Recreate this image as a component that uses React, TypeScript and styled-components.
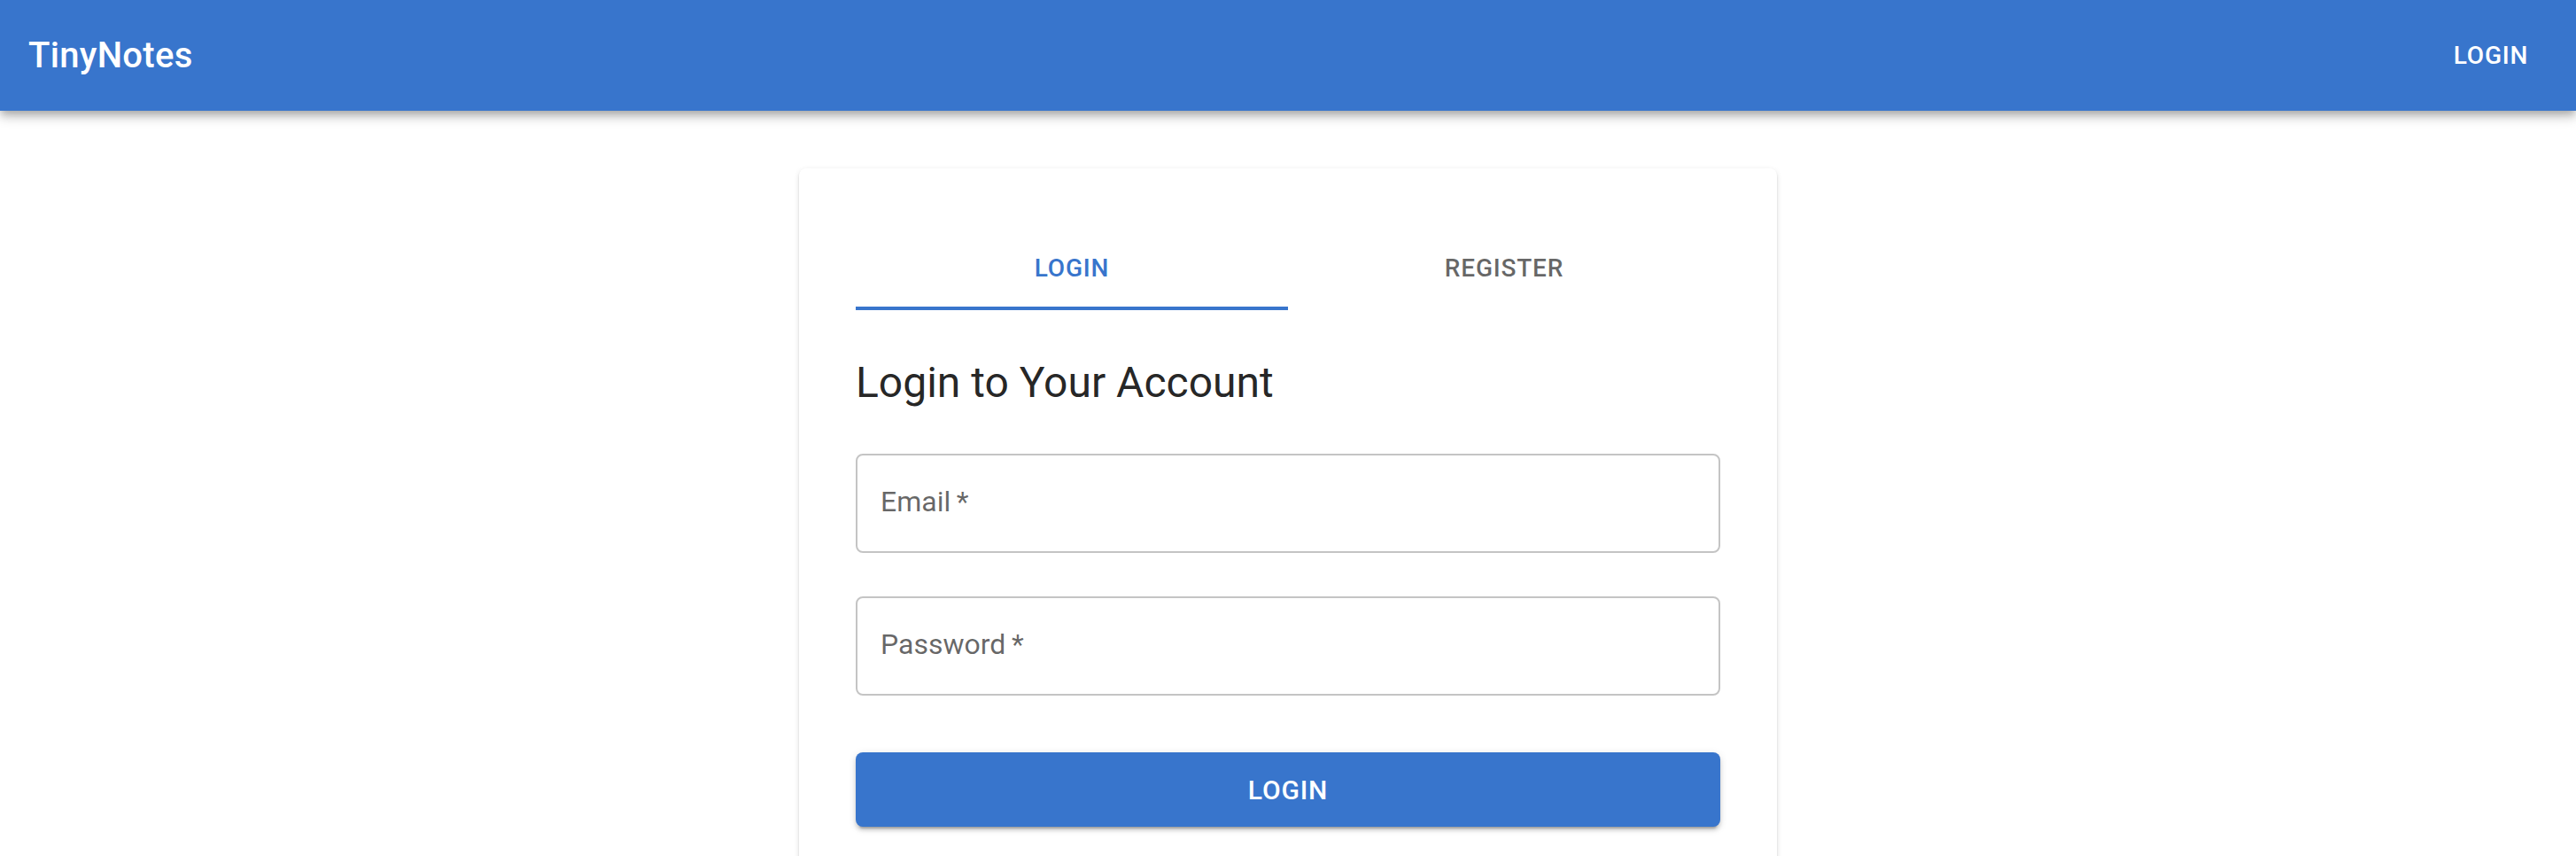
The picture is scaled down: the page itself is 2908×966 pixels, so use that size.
import React from "react";
import styled, { createGlobalStyle } from "styled-components";

const GlobalStyle = createGlobalStyle`
  html, body {
    margin: 0;
    padding: 0;
    background: #ffffff;
    font-family: Roboto, "Helvetica Neue", Arial, sans-serif;
    -webkit-font-smoothing: antialiased;
  }
  * { box-sizing: border-box; }
`;

const PRIMARY = "#3875cc";

const AppBar = styled.header`
  height: 125px;
  background: ${PRIMARY};
  color: #ffffff;
  display: flex;
  align-items: center;
  justify-content: space-between;
  padding: 0 32px;
  box-shadow: 0px 4px 8px -2px rgba(0, 0, 0, 0.2),
    0px 8px 10px 0px rgba(0, 0, 0, 0.14), 0px 2px 20px 0px rgba(0, 0, 0, 0.12);
  position: relative;
  z-index: 2;
`;

const Brand = styled.div`
  font-size: 40px;
  font-weight: 500;
  letter-spacing: 0.3px;
  line-height: 64px;
`;

const NavButton = styled.button`
  min-width: 128px;
  padding: 12px 16px;
  border: 0;
  background: transparent;
  color: #ffffff;
  font-family: inherit;
  font-size: 28px;
  font-weight: 500;
  letter-spacing: 0.8px;
  line-height: 1.75;
  text-transform: uppercase;
  border-radius: 8px;
  cursor: pointer;
`;

const Container = styled.main`
  max-width: 1200px;
  margin: 65px auto 0;
  padding: 0 48px;
`;

const Card = styled.section`
  background: #ffffff;
  border-radius: 8px;
  padding: 64px;
  box-shadow: 0px 4px 2px -2px rgba(0, 0, 0, 0.2),
    0px 2px 2px 0px rgba(0, 0, 0, 0.14), 0px 2px 6px 0px rgba(0, 0, 0, 0.12);
`;

const TabList = styled.div`
  display: grid;
  grid-template-columns: 1fr 1fr;
`;

const Tab = styled.button<{ $active?: boolean }>`
  height: 96px;
  border: 0;
  background: transparent;
  font-family: inherit;
  font-size: 28px;
  font-weight: 500;
  letter-spacing: 0.8px;
  text-transform: uppercase;
  color: ${(p) => (p.$active ? PRIMARY : "rgba(0, 0, 0, 0.6)")};
  box-shadow: ${(p) => (p.$active ? `inset 0 -4px 0 ${PRIMARY}` : "none")};
  cursor: pointer;
  padding: 0;
`;

const Heading = styled.h1`
  margin: 50px 0 48px;
  font-size: 48px;
  font-weight: 400;
  line-height: 64px;
  color: rgba(0, 0, 0, 0.87);
`;

const Form = styled.form`
  display: flex;
  flex-direction: column;
  gap: 49px;
`;

const Field = styled.label`
  height: 112px;
  border: 2px solid rgba(0, 0, 0, 0.23);
  border-radius: 8px;
  display: flex;
  align-items: center;
  padding: 0 26px;
`;

const FieldLabel = styled.span`
  font-size: 32px;
  color: rgba(0, 0, 0, 0.6);
  line-height: 46px;
  padding-bottom: 4px;
`;

const SubmitButton = styled.button`
  margin-top: 15px;
  height: 84px;
  width: 100%;
  border: 0;
  border-radius: 8px;
  background: ${PRIMARY};
  color: #ffffff;
  font-family: inherit;
  font-size: 30px;
  font-weight: 500;
  letter-spacing: 0.86px;
  text-transform: uppercase;
  box-shadow: 0px 6px 2px -4px rgba(0, 0, 0, 0.2),
    0px 4px 4px 0px rgba(0, 0, 0, 0.14), 0px 2px 10px 0px rgba(0, 0, 0, 0.12);
  cursor: pointer;
`;

export default function App() {
  return (
    <>
      <GlobalStyle />
      <AppBar>
        <Brand>TinyNotes</Brand>
        <NavButton>Login</NavButton>
      </AppBar>
      <Container>
        <Card>
          <TabList>
            <Tab $active>Login</Tab>
            <Tab>Register</Tab>
          </TabList>
          <Heading>Login to Your Account</Heading>
          <Form onSubmit={(e) => e.preventDefault()}>
            <Field>
              <FieldLabel>Email{"\u2009"}*</FieldLabel>
            </Field>
            <Field>
              <FieldLabel>Password{"\u2009"}*</FieldLabel>
            </Field>
            <SubmitButton type="submit">Login</SubmitButton>
          </Form>
        </Card>
      </Container>
    </>
  );
}
